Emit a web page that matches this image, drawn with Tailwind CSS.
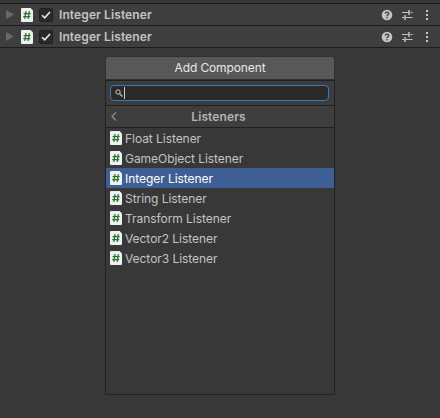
<!DOCTYPE html>
<html lang="en">
<head>
<meta charset="utf-8">
<title>Inspector</title>
<script src="https://cdn.jsdelivr.net/npm/@tailwindcss/browser@4"></script>
</head>
<body class="w-[440px] h-[418px] overflow-hidden bg-[#383838] font-['Inter',sans-serif] text-[12px] text-[#c4c4c4]">
<svg class="hidden">
  <symbol id="script" viewBox="0 0 12 14"><path d="M1 0H9.5L12 2.5V13Q12 14 11 14H1Q0 14 0 13V1Q0 0 1 0Z" fill="#f0f0f0"/><path d="M5 3.2L3.8 10.8M8.4 3.2L7.2 10.8M2.6 5.6H9.6M2.2 8.5H9.2" stroke="#23742b" stroke-width="1.25" fill="none"/></symbol>
  <symbol id="check" viewBox="0 0 14 14"><rect x=".5" y=".5" width="13" height="13" rx="1.5" fill="#2a2a2a" stroke="#202020"/><path d="M3 7.2L5.7 9.9L11 4" stroke="#e8e8e8" stroke-width="1.6" fill="none"/></symbol>
  <symbol id="help" viewBox="0 0 12 12"><circle cx="6" cy="6" r="5.3" fill="#c4c4c4"/><path d="M4.2 4.6Q4.3 3.1 6 3.1Q7.8 3.1 7.8 4.6Q7.8 5.4 6.8 5.9Q6 6.3 6 7.2" stroke="#3e3e3e" stroke-width="1.3" fill="none"/><rect x="5.3" y="8.1" width="1.4" height="1.3" fill="#3e3e3e"/></symbol>
  <symbol id="preset" viewBox="0 0 12 12"><path d="M1 3.5H8M9.5 3.5H11.5M1 8.5H3M4 8.5H11.5" stroke="#c4c4c4" stroke-width="1.1" fill="none"/><path d="M8 1V6M4 6V11" stroke="#c4c4c4" stroke-width="1.5" fill="none"/></symbol>
  <symbol id="dots" viewBox="0 0 2 10"><path d="M0 0H2V2H0ZM0 4H2V6H0ZM0 8H2V10H0Z" fill="#c4c4c4"/></symbol>
</svg>
<main class="flex h-full flex-col pt-[3px]">
  <section class="flex h-[22px] items-center border-t border-[#1c1c1c] bg-[#3e3e3e]">
    <svg class="ml-[6px] h-[9px] w-[8px]" viewBox="0 0 8 9"><path d="M0 0L8 4.5L0 9Z" fill="#686868"/></svg>
    <svg class="ml-[7px] h-[14px] w-[12px]"><use href="#script"/></svg>
    <svg class="ml-[6px] h-[14px] w-[14px]"><use href="#check"/></svg>
    <span class="ml-[6px] font-semibold leading-5 tracking-[0.1px]">Integer Listener</span>
    <svg class="ml-auto h-[12px] w-[12px]"><use href="#help"/></svg>
    <svg class="ml-[8px] h-[12px] w-[12px]"><use href="#preset"/></svg>
    <svg class="ml-[13px] mr-[12px] h-[10px] w-[2px]"><use href="#dots"/></svg>
  </section>
  <section class="flex h-[23px] items-center border-y border-[#1c1c1c] bg-[#3e3e3e]">
    <svg class="ml-[6px] h-[9px] w-[8px]" viewBox="0 0 8 9"><path d="M0 0L8 4.5L0 9Z" fill="#686868"/></svg>
    <svg class="ml-[7px] h-[14px] w-[12px]"><use href="#script"/></svg>
    <svg class="ml-[6px] h-[14px] w-[14px]"><use href="#check"/></svg>
    <span class="ml-[6px] font-semibold leading-5 tracking-[0.1px]">Integer Listener</span>
    <svg class="ml-auto h-[12px] w-[12px]"><use href="#help"/></svg>
    <svg class="ml-[8px] h-[12px] w-[12px]"><use href="#preset"/></svg>
    <svg class="ml-[13px] mr-[12px] h-[10px] w-[2px]"><use href="#dots"/></svg>
  </section>
  <div class="ml-[105px] mt-[8px] w-[230px]">
    <button class="flex h-[24px] w-full items-center justify-center rounded-[3px] rounded-b-none border border-[#303030] bg-[#585858] tracking-[-0.12px] text-[#e8e8e8]">Add Component</button>
    <div class="h-[315px] border border-[#212121] bg-[#383838]">
      <div class="flex h-[25px] items-center border-b border-[#212121] bg-[#3c3c3c] px-[4px]">
        <div class="flex h-[16px] w-[219px] items-center rounded-[4px] border border-[#3a79bb] bg-[#2a2a2a]">
          <svg class="ml-[4px] h-[8px] w-[8px]" viewBox="0 0 8 8" fill="none" stroke="#c4c4c4"><circle cx="3" cy="3" r="2.2"/><path d="M4.6 4.6L7.5 7.5" stroke-width="1.3"/></svg>
          <i class="ml-[1px] h-[12px] w-px bg-[#c8c8c8]"></i>
        </div>
      </div>
      <div class="flex h-[22px] items-center border-b border-[#212121] bg-[#3e3e3e]">
        <svg class="ml-[5px] h-[9px] w-[6px]" viewBox="0 0 6 9" fill="none" stroke="#8c8c8c" stroke-width="1.3"><path d="M5 .5L1 4.5L5 8.5"/></svg>
        <span class="flex-1 pr-[14px] text-center font-semibold tracking-[0.1px] text-[#b4b4b4]">Listeners</span>
      </div>
      <ul class="leading-5 tracking-[-0.05px]">
        <li class="flex h-5 items-center pl-[4px]"><svg class="mr-[3px] h-[14px] w-[12px]"><use href="#script"/></svg><span class="pt-[2px]">Float Listener</span></li>
        <li class="flex h-5 items-center pl-[4px]"><svg class="mr-[3px] h-[14px] w-[12px]"><use href="#script"/></svg><span class="pt-[2px]">GameObject Listener</span></li>
        <li class="flex h-5 items-center bg-[#3e5f96] pl-[4px] text-white"><svg class="mr-[3px] h-[14px] w-[12px]"><use href="#script"/></svg><span class="pt-[2px]">Integer Listener</span></li>
        <li class="flex h-5 items-center pl-[4px]"><svg class="mr-[3px] h-[14px] w-[12px]"><use href="#script"/></svg><span class="pt-[2px]">String Listener</span></li>
        <li class="flex h-5 items-center pl-[4px]"><svg class="mr-[3px] h-[14px] w-[12px]"><use href="#script"/></svg><span class="pt-[2px]">Transform Listener</span></li>
        <li class="flex h-5 items-center pl-[4px]"><svg class="mr-[3px] h-[14px] w-[12px]"><use href="#script"/></svg><span class="pt-[2px]">Vector2 Listener</span></li>
        <li class="flex h-5 items-center pl-[4px]"><svg class="mr-[3px] h-[14px] w-[12px]"><use href="#script"/></svg><span class="pt-[2px]">Vector3 Listener</span></li>
      </ul>
    </div>
  </div>
</main>
</body>
</html>
